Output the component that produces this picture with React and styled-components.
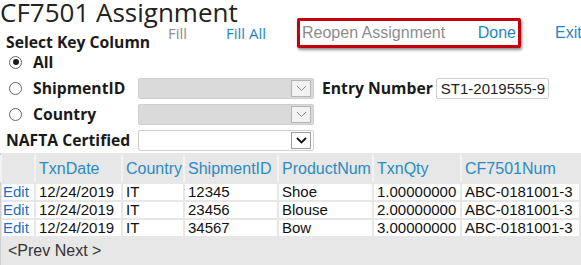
import React from 'react';
import styled, { createGlobalStyle } from 'styled-components';

const GlobalStyle = createGlobalStyle`
  html, body {
    margin: 0;
    padding: 0;
    background: #ffffff;
  }
  body {
    font-family: "Open Sans", "Noto Sans", sans-serif;
    color: #1a1a1a;
    overflow: hidden;
  }
`;

const Page = styled.div`
  width: 581px;
  height: 265px;
  overflow: hidden;
`;

const Title = styled.h1`
  margin: 0;
  font-family: "Open Sans", sans-serif;
  font-weight: 400;
  font-size: 26px;
  line-height: 24px;
  height: 24px;
  color: #222;
  white-space: nowrap;
`;

const HeadRow = styled.div`
  display: flex;
  align-items: flex-start;
  height: 34px;
  margin-top: -6px;
`;

const SectionLabel = styled.div`
  flex: 0 0 162px;
  margin: 15px 0 0 6px;
  font-weight: 700;
  font-size: 15.7px;
  line-height: 18px;
  white-space: nowrap;
`;

const Toolbar = styled.div`
  display: flex;
  align-items: center;
  height: 30px;
`;

const ToolLink = styled.a`
  font-family: ${({ $arial }) => ($arial ? '"Liberation Sans", Arial, sans-serif' : '"Open Sans", sans-serif')};
  font-size: ${({ $arial }) => ($arial ? '16px' : '15px')};
  line-height: 18px;
  color: ${({ $muted }) => ($muted ? '#8c8c8c' : '#1f87c2')};
  text-decoration: none;
  width: ${({ $w }) => ($w ? $w + 'px' : 'auto')};
  margin-left: ${({ $ml }) => ($ml || 0) + 'px'};
  white-space: nowrap;
`;

const Highlight = styled.div`
  box-sizing: border-box;
  width: 224px;
  height: 30px;
  display: flex;
  align-items: center;
  justify-content: space-between;
  padding: 0 2px;
  border: 3px solid #c4000c;
  border-radius: 2px;
  background: #fff;
  box-shadow: 1px 2px 3px rgba(0, 0, 0, 0.45);
`;

const Form = styled.div`
  display: grid;
  grid-template-columns: 138px 176px auto;
  grid-auto-rows: 22px;
  row-gap: 4px;
  margin-top: -1px;
  align-items: center;
`;

const Choice = styled.label`
  display: flex;
  align-items: center;
  gap: 11px;
  padding-left: 9px;
  font-weight: 700;
  font-size: 15.7px;
  line-height: 20px;
  white-space: nowrap;
`;

const Radio = styled.span`
  box-sizing: border-box;
  width: 13px;
  height: 13px;
  border-radius: 50%;
  border: 1px solid #666;
  background: #fff;
  display: flex;
  align-items: center;
  justify-content: center;
  &::after {
    content: '';
    width: 6px;
    height: 6px;
    border-radius: 50%;
    background: ${({ $on }) => ($on ? '#1a1a1a' : 'transparent')};
  }
`;

const FieldLabel = styled.div`
  font-weight: 700;
  font-size: 15.7px;
  line-height: 20px;
  padding-left: ${({ $pl }) => ($pl || 0) + 'px'};
  white-space: nowrap;
`;

const SelectBox = styled.div`
  box-sizing: border-box;
  width: 176px;
  height: 21px;
  border: 1px solid #cfcfcf;
  border-radius: 2px;
  background: ${({ $disabled }) => ($disabled ? '#dadada' : '#ffffff')};
  display: flex;
  justify-content: flex-end;
  align-items: center;
  padding-right: 2px;
`;

const ArrowBox = styled.span`
  box-sizing: border-box;
  width: 20px;
  height: 17px;
  border: 1px solid ${({ $disabled }) => ($disabled ? '#b4b4b4' : '#9c9c9c')};
  background: ${({ $disabled }) => ($disabled ? '#f2f2f2' : '#ffffff')};
  display: flex;
  align-items: center;
  justify-content: center;
`;

const EntryGroup = styled.div`
  display: flex;
  align-items: center;
  gap: 3px;
  padding-left: 8px;
`;

const TextBox = styled.div`
  box-sizing: border-box;
  width: 113px;
  height: 21px;
  border: 1px solid #d0d0d0;
  border-radius: 2px;
  padding-left: 4px;
  font-family: "Liberation Sans", Arial, sans-serif;
  font-size: 15px;
  line-height: 19px;
  color: #222;
  white-space: nowrap;
  overflow: hidden;
`;

const Grid = styled.table`
  margin-top: 2px;
  width: 581px;
  table-layout: fixed;
  border-collapse: separate;
  border-spacing: 2px;
  background: #e7e7e7;
  font-family: "Liberation Sans", Arial, sans-serif;
  box-shadow: inset 1px 0 0 #cfcfcf;
`;

const Head = styled.th`
  width: ${({ $w }) => $w}px;
  height: 27px;
  padding: 0 0 0 3px;
  text-align: left;
  font-weight: 400;
  font-size: 16px;
  color: #2a8bc3;
  background: #e7e7e7;
  box-shadow: -2px 0 0 #f3f3f3;
  white-space: nowrap;
  overflow: hidden;
`;

const Cell = styled.td`
  height: 16px;
  padding: 0 0 0 3px;
  background: #fff;
  font-size: 15px;
  line-height: 16px;
  color: #111;
  white-space: nowrap;
  overflow: hidden;
`;

const EditLink = styled.a`
  color: #1f6fbf;
  text-decoration: none;
  margin-left: -2px;
`;

const Pager = styled.td`
  height: 26px;
  padding: 0 0 0 6px;
  background: #e7e7e7;
  font-size: 16px;
  color: #333;
`;

function Chevron({ disabled }) {
  return (
    <svg width="11" height="7" viewBox="0 0 11 7">
      <path
        d="M1 1 L5.5 5.5 L10 1"
        fill="none"
        stroke={disabled ? '#8c8c8c' : '#111'}
        strokeWidth={disabled ? 1 : 1.8}
      />
    </svg>
  );
}

function Dropdown({ disabled }) {
  return (
    <SelectBox $disabled={disabled}>
      <ArrowBox $disabled={disabled}>
        <Chevron disabled={disabled} />
      </ArrowBox>
    </SelectBox>
  );
}

const columns = [
  { key: 'edit', label: '', w: 29 },
  { key: 'date', label: 'TxnDate', w: 82 },
  { key: 'country', label: 'Country', w: 57 },
  { key: 'ship', label: 'ShipmentID', w: 89 },
  { key: 'product', label: 'ProductNum', w: 90 },
  { key: 'qty', label: 'TxnQty', w: 83 },
  { key: 'cf', label: 'CF7501Num', w: 114 },
];

const rows = [
  { date: '12/24/2019', country: 'IT', ship: '12345', product: 'Shoe', qty: '1.00000000', cf: 'ABC-0181001-3' },
  { date: '12/24/2019', country: 'IT', ship: '23456', product: 'Blouse', qty: '2.00000000', cf: 'ABC-0181001-3' },
  { date: '12/24/2019', country: 'IT', ship: '34567', product: 'Bow', qty: '3.00000000', cf: 'ABC-0181001-3' },
];

export default function App() {
  return (
    <>
      <GlobalStyle />
      <Page>
        <Title>CF7501 Assignment</Title>
        <HeadRow>
          <SectionLabel>Select Key Column</SectionLabel>
          <Toolbar>
            <ToolLink $muted $w={58}>Fill</ToolLink>
            <ToolLink $w={71}>Fill All</ToolLink>
            <Highlight>
              <ToolLink $arial $muted>Reopen Assignment</ToolLink>
              <ToolLink $arial>Done</ToolLink>
            </Highlight>
            <ToolLink $arial $ml={34}>Exit</ToolLink>
          </Toolbar>
        </HeadRow>

        <Form>
          <Choice>
            <Radio $on />
            All
          </Choice>
          <span />
          <span />

          <Choice>
            <Radio />
            ShipmentID
          </Choice>
          <Dropdown disabled />
          <EntryGroup>
            <FieldLabel>Entry Number</FieldLabel>
            <TextBox>ST1-2019555-9</TextBox>
          </EntryGroup>

          <Choice>
            <Radio />
            Country
          </Choice>
          <Dropdown disabled />
          <span />

          <FieldLabel $pl={6}>NAFTA Certified</FieldLabel>
          <Dropdown />
          <span />
        </Form>

        <Grid>
          <thead>
            <tr>
              {columns.map((c) => (
                <Head key={c.key} $w={c.w}>{c.label}</Head>
              ))}
            </tr>
          </thead>
          <tbody>
            {rows.map((r, i) => (
              <tr key={i}>
                <Cell><EditLink>Edit</EditLink></Cell>
                <Cell>{r.date}</Cell>
                <Cell>{r.country}</Cell>
                <Cell>{r.ship}</Cell>
                <Cell>{r.product}</Cell>
                <Cell>{r.qty}</Cell>
                <Cell>{r.cf}</Cell>
              </tr>
            ))}
            <tr>
              <Pager colSpan={7}>&lt;Prev Next &gt;</Pager>
            </tr>
          </tbody>
        </Grid>
      </Page>
    </>
  );
}
